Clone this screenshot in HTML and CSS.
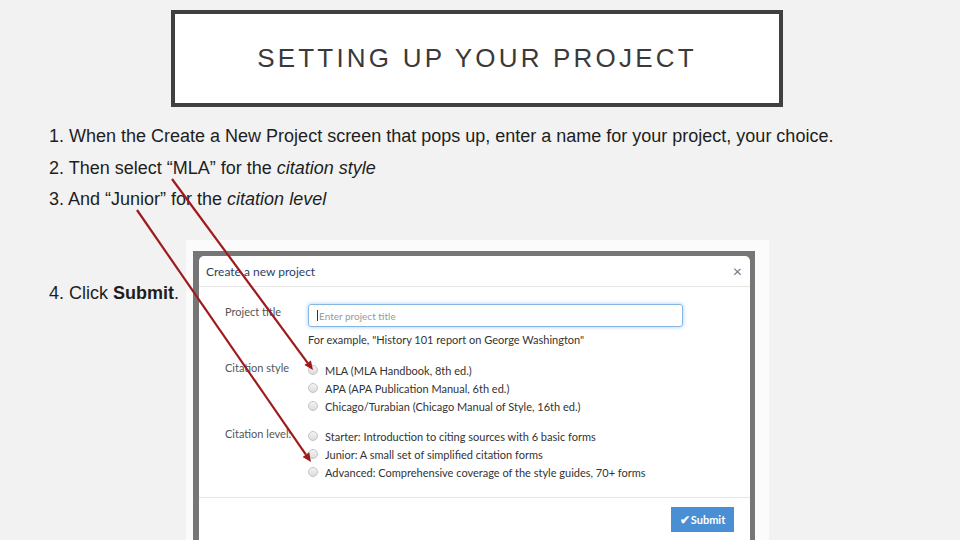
FILE: index.html
```html
<!DOCTYPE html>
<html>
<head>
<meta charset="utf-8">
<link rel="stylesheet" href="styles.css">
</head>
<body>
<div class="title-box"><h1>SETTING UP YOUR PROJECT</h1></div>
<ul class="steps">
  <li>1. When the Create a New Project screen that pops up, enter a name for your project, your choice.</li>
  <li>2. Then select “MLA” for the <i>citation style</i></li>
  <li>3. And “Junior” for the <i>citation level</i></li>
</ul>
<div class="row">
  <div class="step4">4. Click <b>Submit</b>.</div>
  <div class="shot">
    <div class="backdrop">
      <div class="modal">
        <div class="modal-header">
          <span class="modal-title">Create a new project</span>
          <span class="close">×</span>
        </div>
        <div class="modal-body">
          <div class="field">
            <div class="label label-title">Project title</div>
            <div class="controls">
              <div class="input"><span class="caret"></span><span class="ph">Enter project title</span></div>
              <div class="help">For example, "History 101 report on George Washington"</div>
            </div>
          </div>
          <div class="field field-gap1">
            <div class="label">Citation style</div>
            <div class="controls">
              <div class="radio"><span class="dot"></span>MLA (MLA Handbook, 8th ed.)</div>
              <div class="radio"><span class="dot"></span>APA (APA Publication Manual, 6th ed.)</div>
              <div class="radio"><span class="dot"></span>Chicago/Turabian (Chicago Manual of Style, 16th ed.)</div>
            </div>
          </div>
          <div class="field field-gap2">
            <div class="label">Citation level:</div>
            <div class="controls">
              <div class="radio"><span class="dot"></span>Starter: Introduction to citing sources with 6 basic forms</div>
              <div class="radio"><span class="dot"></span>Junior: A small set of simplified citation forms</div>
              <div class="radio"><span class="dot"></span>Advanced: Comprehensive coverage of the style guides, 70+ forms</div>
            </div>
          </div>
        </div>
        <div class="modal-footer">
          <span class="btn"><span class="check">✔</span>Submit</span>
        </div>
      </div>
    </div>
  </div>
</div>
<svg class="arrows" width="960" height="540" viewBox="0 0 960 540">
  <line x1="172" y1="179" x2="307.6" y2="362.8" stroke="#9e1a1c" stroke-width="2.2"/>
  <polygon points="313,370 304.4,365.1 310.9,360.4" fill="#9e1a1c"/>
  <line x1="137" y1="210" x2="305.9" y2="454.6" stroke="#9e1a1c" stroke-width="2.2"/>
  <polygon points="311,462 302.6,456.9 309.2,452.3" fill="#9e1a1c"/>
</svg>
</body>
</html>
```
FILE: styles.css
```css
html, body {
  margin: 0;
  padding: 0;
}
body {
  position: relative;
  width: 960px;
  height: 540px;
  overflow: hidden;
  background: #f2f2f2;
  font-family: "Liberation Sans", Arial, sans-serif;
  color: #1e1e1e;
}
.title-box {
  margin: 10px 0 0 171px;
  width: 612px;
  height: 97px;
  box-sizing: border-box;
  border: 4px solid #404040;
  background: #fff;
  display: flex;
  align-items: center;
  justify-content: center;
}
.title-box h1 {
  margin: 0;
  font-size: 26px;
  font-weight: normal;
  letter-spacing: 3.2px;
  color: #3a3a3a;
}
.steps {
  list-style: none;
  margin: 13px 0 0 49px;
  padding: 0;
}
.steps li {
  height: 32px;
  line-height: 32px;
  font-size: 18px;
}
.steps li:nth-child(3) {
  height: 30px;
  line-height: 30px;
}
.row {
  display: flex;
  margin-top: 26px;
}
.step4 {
  width: 137px;
  padding: 41px 0 0 49px;
  line-height: 24px;
  font-size: 18px;
}
.shot {
  width: 583px;
  height: 300px;
  box-sizing: border-box;
  background: #fbfbfb;
  padding: 11px 14px 0 7px;
}
.backdrop {
  height: 100%;
  box-sizing: border-box;
  background: #767676;
  padding: 5px 5px 0 6px;
}
.modal {
  height: 100%;
  background: #fff;
  border-radius: 5px 5px 0 0;
  font-family: Lato, "Open Sans", sans-serif;
  color: #333;
}
.modal-header {
  height: 30px;
  border-bottom: 1px solid #e5e5e5;
  display: flex;
  align-items: center;
  justify-content: space-between;
  padding: 0 8px 0 7px;
}
.modal-title {
  font-size: 12px;
  color: #2c3d6b;
}
.close {
  font-size: 16px;
  color: #777;
  line-height: 16px;
}
.modal-body {
  padding: 17px 0 16px 26px;
}
.field {
  display: grid;
  grid-template-columns: 83px 375px;
}
.field-gap1 {
  margin-top: 14px;
}
.field-gap2 {
  margin-top: 12px;
}
.label {
  font-size: 11px;
  line-height: 14px;
  color: #555;
}
.label-title {
  padding-top: 1px;
}
.input {
  height: 23px;
  box-sizing: border-box;
  border: 1px solid #86b6e2;
  border-radius: 3px;
  box-shadow: 0 0 4px rgba(102, 175, 233, 0.6);
  display: flex;
  align-items: center;
  padding-left: 8px;
}
.caret {
  width: 1px;
  height: 11px;
  background: #333;
  margin-right: 1px;
}
.ph {
  font-size: 10px;
  color: #999;
}
.help {
  margin-top: 6px;
  font-size: 11px;
  line-height: 14px;
  color: #333;
}
.radio {
  height: 18px;
  display: flex;
  align-items: center;
  font-size: 11px;
  color: #333;
  white-space: nowrap;
}
.dot {
  width: 8px;
  height: 8px;
  border: 1px solid #c4c4c4;
  border-radius: 50%;
  background: linear-gradient(#f4f4f4, #dcdcdc);
  margin: 0 7px 0 0;
  flex: none;
}
.modal-footer {
  border-top: 1px solid #e5e5e5;
  padding: 9px 16px;
  display: flex;
  justify-content: flex-end;
}
.btn {
  width: 63px;
  height: 25px;
  background: #4a8fd3;
  color: #fff;
  font-size: 11px;
  font-weight: bold;
  display: flex;
  align-items: center;
  justify-content: center;
}
.check {
  font-size: 12px;
  margin-right: 1px;
}
.arrows {
  position: absolute;
  top: 0;
  left: 0;
  pointer-events: none;
}
```
